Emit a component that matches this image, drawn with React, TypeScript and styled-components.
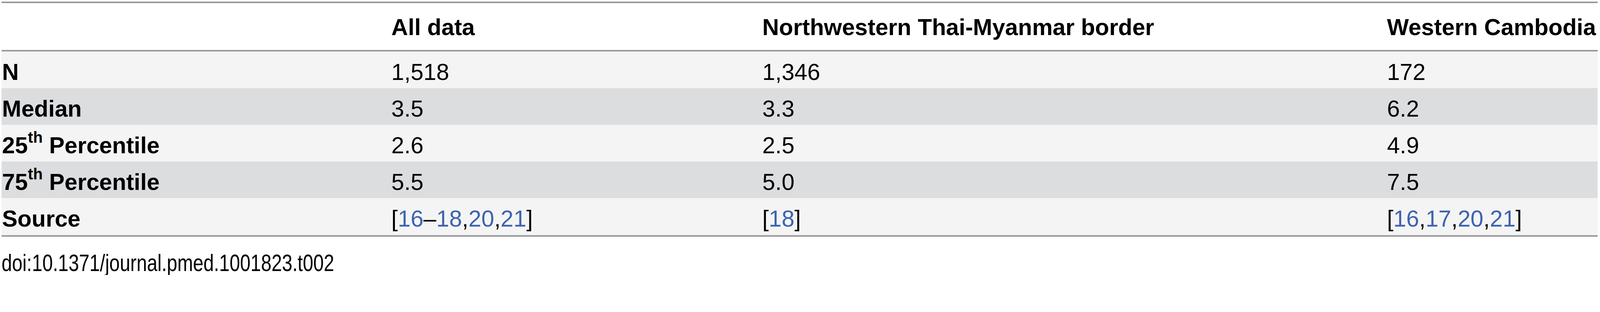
import React from 'react';
import styled, { createGlobalStyle } from 'styled-components';

// All sizes are expressed relative to the 4567px-wide frame so the layout
// keeps the reference proportions whatever the CSS viewport width is.
const u = (n: number) => `${((n / 4567) * 100).toFixed(4)}vw`;

const GlobalStyle = createGlobalStyle`
  html, body { margin: 0; padding: 0; background: #ffffff; overflow: hidden; }
  body { font-family: "Liberation Sans", Arial, Helvetica, sans-serif; color: #000000; }
`;

const Page = styled.div`
  padding: ${u(4)} 0 0 ${u(4)};
`;

const Table = styled.table`
  width: ${u(4556)};
  table-layout: fixed;
  border-collapse: separate;
  border-spacing: 0;
  font-size: ${u(66)};
  line-height: ${u(76)};
`;

const Col = styled.col<{ $w: number }>`
  width: ${(p) => u(p.$w)};
`;

const HeadCell = styled.th`
  text-align: left;
  font-weight: 700;
  white-space: nowrap;
  background: #ffffff;
  padding: ${u(32)} 0 ${u(26)} ${u(2)};
  border-top: ${u(5)} solid #9a9a9a;
  border-bottom: ${u(5)} solid #9a9a9a;
`;

const Row = styled.tr<{ $shade: boolean }>`
  background: ${(p) => (p.$shade ? '#dcdddf' : '#f4f4f4')};
`;

const Cell = styled.td<{ $last?: boolean; $label?: boolean }>`
  padding: ${u(21)} 0 ${u(8)} ${u(2)};
  white-space: nowrap;
  font-weight: ${(p) => (p.$label ? 700 : 400)};
  border-bottom: ${(p) => (p.$last ? `${u(5)} solid #9a9a9a` : '0')};
`;

const Sup = styled.sup`
  font-size: ${u(45)};
  line-height: 0;
  vertical-align: ${u(30)};
`;

const Ref = styled.a`
  color: #3d64ae;
  text-decoration: none;
`;

const Caption = styled.div`
  margin-top: ${u(42)};
  font-size: ${u(68)};
  line-height: ${u(68)};
  white-space: nowrap;
`;

const CaptionText = styled.span`
  display: inline-block;
  transform: scaleX(0.79);
  transform-origin: left center;
`;

type Part = { t: string; link?: boolean };

const src = (parts: Part[]) => (
  <>
    {parts.map((p, i) =>
      p.link ? (
        <Ref key={i} href="#">
          {p.t}
        </Ref>
      ) : (
        <React.Fragment key={i}>{p.t}</React.Fragment>
      )
    )}
  </>
);

const rows: { label: React.ReactNode; vals: React.ReactNode[] }[] = [
  { label: 'N', vals: ['1,518', '1,346', '172'] },
  { label: 'Median', vals: ['3.5', '3.3', '6.2'] },
  {
    label: (
      <>
        25<Sup>th</Sup> Percentile
      </>
    ),
    vals: ['2.6', '2.5', '4.9'],
  },
  {
    label: (
      <>
        75<Sup>th</Sup> Percentile
      </>
    ),
    vals: ['5.5', '5.0', '7.5'],
  },
  {
    label: 'Source',
    vals: [
      src([
        { t: '[' },
        { t: '16', link: true },
        { t: '–' },
        { t: '18', link: true },
        { t: ',' },
        { t: '20', link: true },
        { t: ',' },
        { t: '21', link: true },
        { t: ']' },
      ]),
      src([{ t: '[' }, { t: '18', link: true }, { t: ']' }]),
      src([
        { t: '[' },
        { t: '16', link: true },
        { t: ',' },
        { t: '17', link: true },
        { t: ',' },
        { t: '20', link: true },
        { t: ',' },
        { t: '21', link: true },
        { t: ']' },
      ]),
    ],
  },
];

export default function App() {
  return (
    <>
      <GlobalStyle />
      <Page>
        <Table>
          <colgroup>
            <Col $w={1111} />
            <Col $w={1059} />
            <Col $w={1783} />
            <Col $w={603} />
          </colgroup>
          <thead>
            <tr>
              <HeadCell />
              <HeadCell>All data</HeadCell>
              <HeadCell>Northwestern Thai-Myanmar border</HeadCell>
              <HeadCell>Western Cambodia</HeadCell>
            </tr>
          </thead>
          <tbody>
            {rows.map((r, i) => {
              const last = i === rows.length - 1;
              return (
                <Row key={i} $shade={i % 2 === 1}>
                  <Cell $label $last={last}>
                    {r.label}
                  </Cell>
                  {r.vals.map((v, j) => (
                    <Cell key={j} $last={last}>
                      {v}
                    </Cell>
                  ))}
                </Row>
              );
            })}
          </tbody>
        </Table>
        <Caption>
          <CaptionText>doi:10.1371/journal.pmed.1001823.t002</CaptionText>
        </Caption>
      </Page>
    </>
  );
}
